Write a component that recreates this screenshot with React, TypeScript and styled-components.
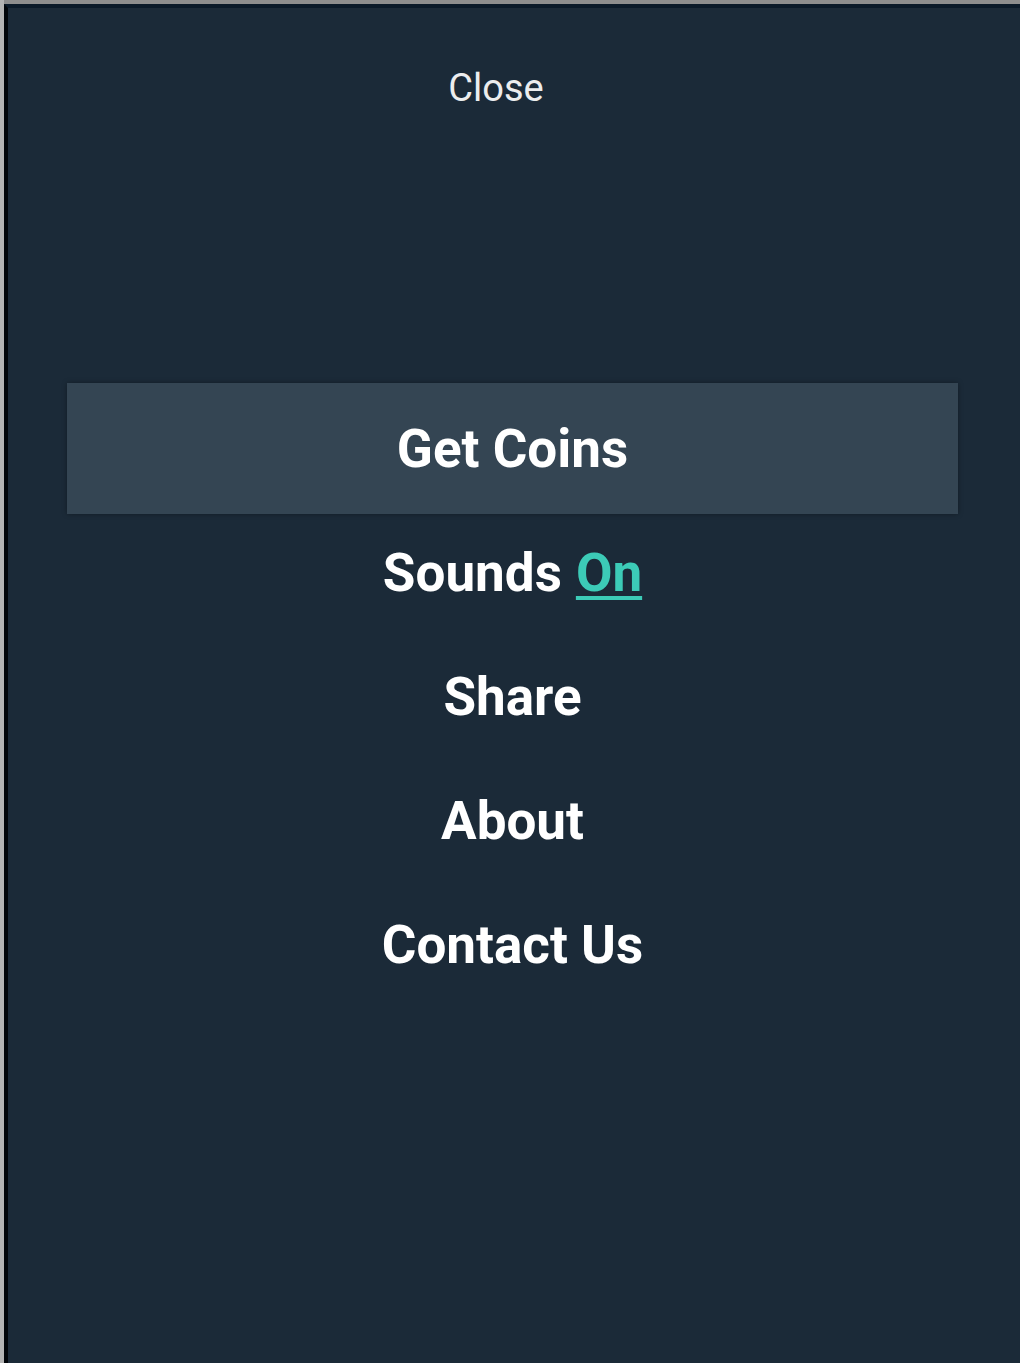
import React from 'react';
import styled, { createGlobalStyle } from 'styled-components';

const GlobalStyle = createGlobalStyle`
  html, body {
    margin: 0;
    padding: 0;
    background-color: #8e8e8e;
  }
  body {
    font-family: Roboto, 'Liberation Sans', Arial, sans-serif;
  }
`;

const Frame = styled.div`
  padding: 4px 0 0 4px;
  background: linear-gradient(90deg, #b4b4b4 0, #b4b4b4 4px, #8e8e8e 4px);
  min-height: 1363px;
  box-sizing: border-box;
  display: flex;
`;

const Drawer = styled.div`
  flex: 1;
  background-color: #1b2a38;
  border-top: 4px solid #0b1a29;
  border-left: 4px solid #02060a;
  display: flex;
  flex-direction: column;
  align-items: stretch;
`;

const CloseBar = styled.div`
  display: flex;
  justify-content: center;
  padding: 51px 36px 0 0;
  height: 375px;
  box-sizing: border-box;
`;

const CloseButton = styled.button`
  background: none;
  border: none;
  padding: 0;
  color: #ecedee;
  font-family: Roboto, 'Liberation Sans', Arial, sans-serif;
  font-size: 38px;
  line-height: 1;
  cursor: pointer;
  height: 58px;
  align-self: flex-start;
  display: flex;
  align-items: center;
`;

const Menu = styled.ul`
  list-style: none;
  margin: 0;
  padding: 0 62px 0 59px;
`;

const MenuItem = styled.li<{ $active?: boolean }>`
  display: flex;
  align-items: center;
  justify-content: center;
  height: ${(p) => (p.$active ? '131px' : '124px')};
  margin: ${(p) => (p.$active ? '0 0 -3px' : '0')};
  background-color: ${(p) => (p.$active ? '#344553' : 'transparent')};
  box-shadow: ${(p) => (p.$active ? '0 0 5px rgba(0, 0, 0, 0.35)' : 'none')};
  color: #ffffff;
  font-size: 53px;
  font-weight: 700;
  cursor: pointer;
`;

const Toggle = styled.span`
  color: #3ccbb7;
  text-decoration: underline;
  text-decoration-thickness: 4px;
  text-underline-offset: 5px;
  margin-left: 14px;
`;

const items = ['Share', 'About', 'Contact Us'];

export default function App() {
  return (
    <>
      <GlobalStyle />
      <Frame>
        <Drawer>
          <CloseBar>
            <CloseButton>Close</CloseButton>
          </CloseBar>
          <Menu>
            <MenuItem $active>Get Coins</MenuItem>
            <MenuItem>
              Sounds<Toggle>On</Toggle>
            </MenuItem>
            {items.map((item) => (
              <MenuItem key={item}>{item}</MenuItem>
            ))}
          </Menu>
        </Drawer>
      </Frame>
    </>
  );
}
